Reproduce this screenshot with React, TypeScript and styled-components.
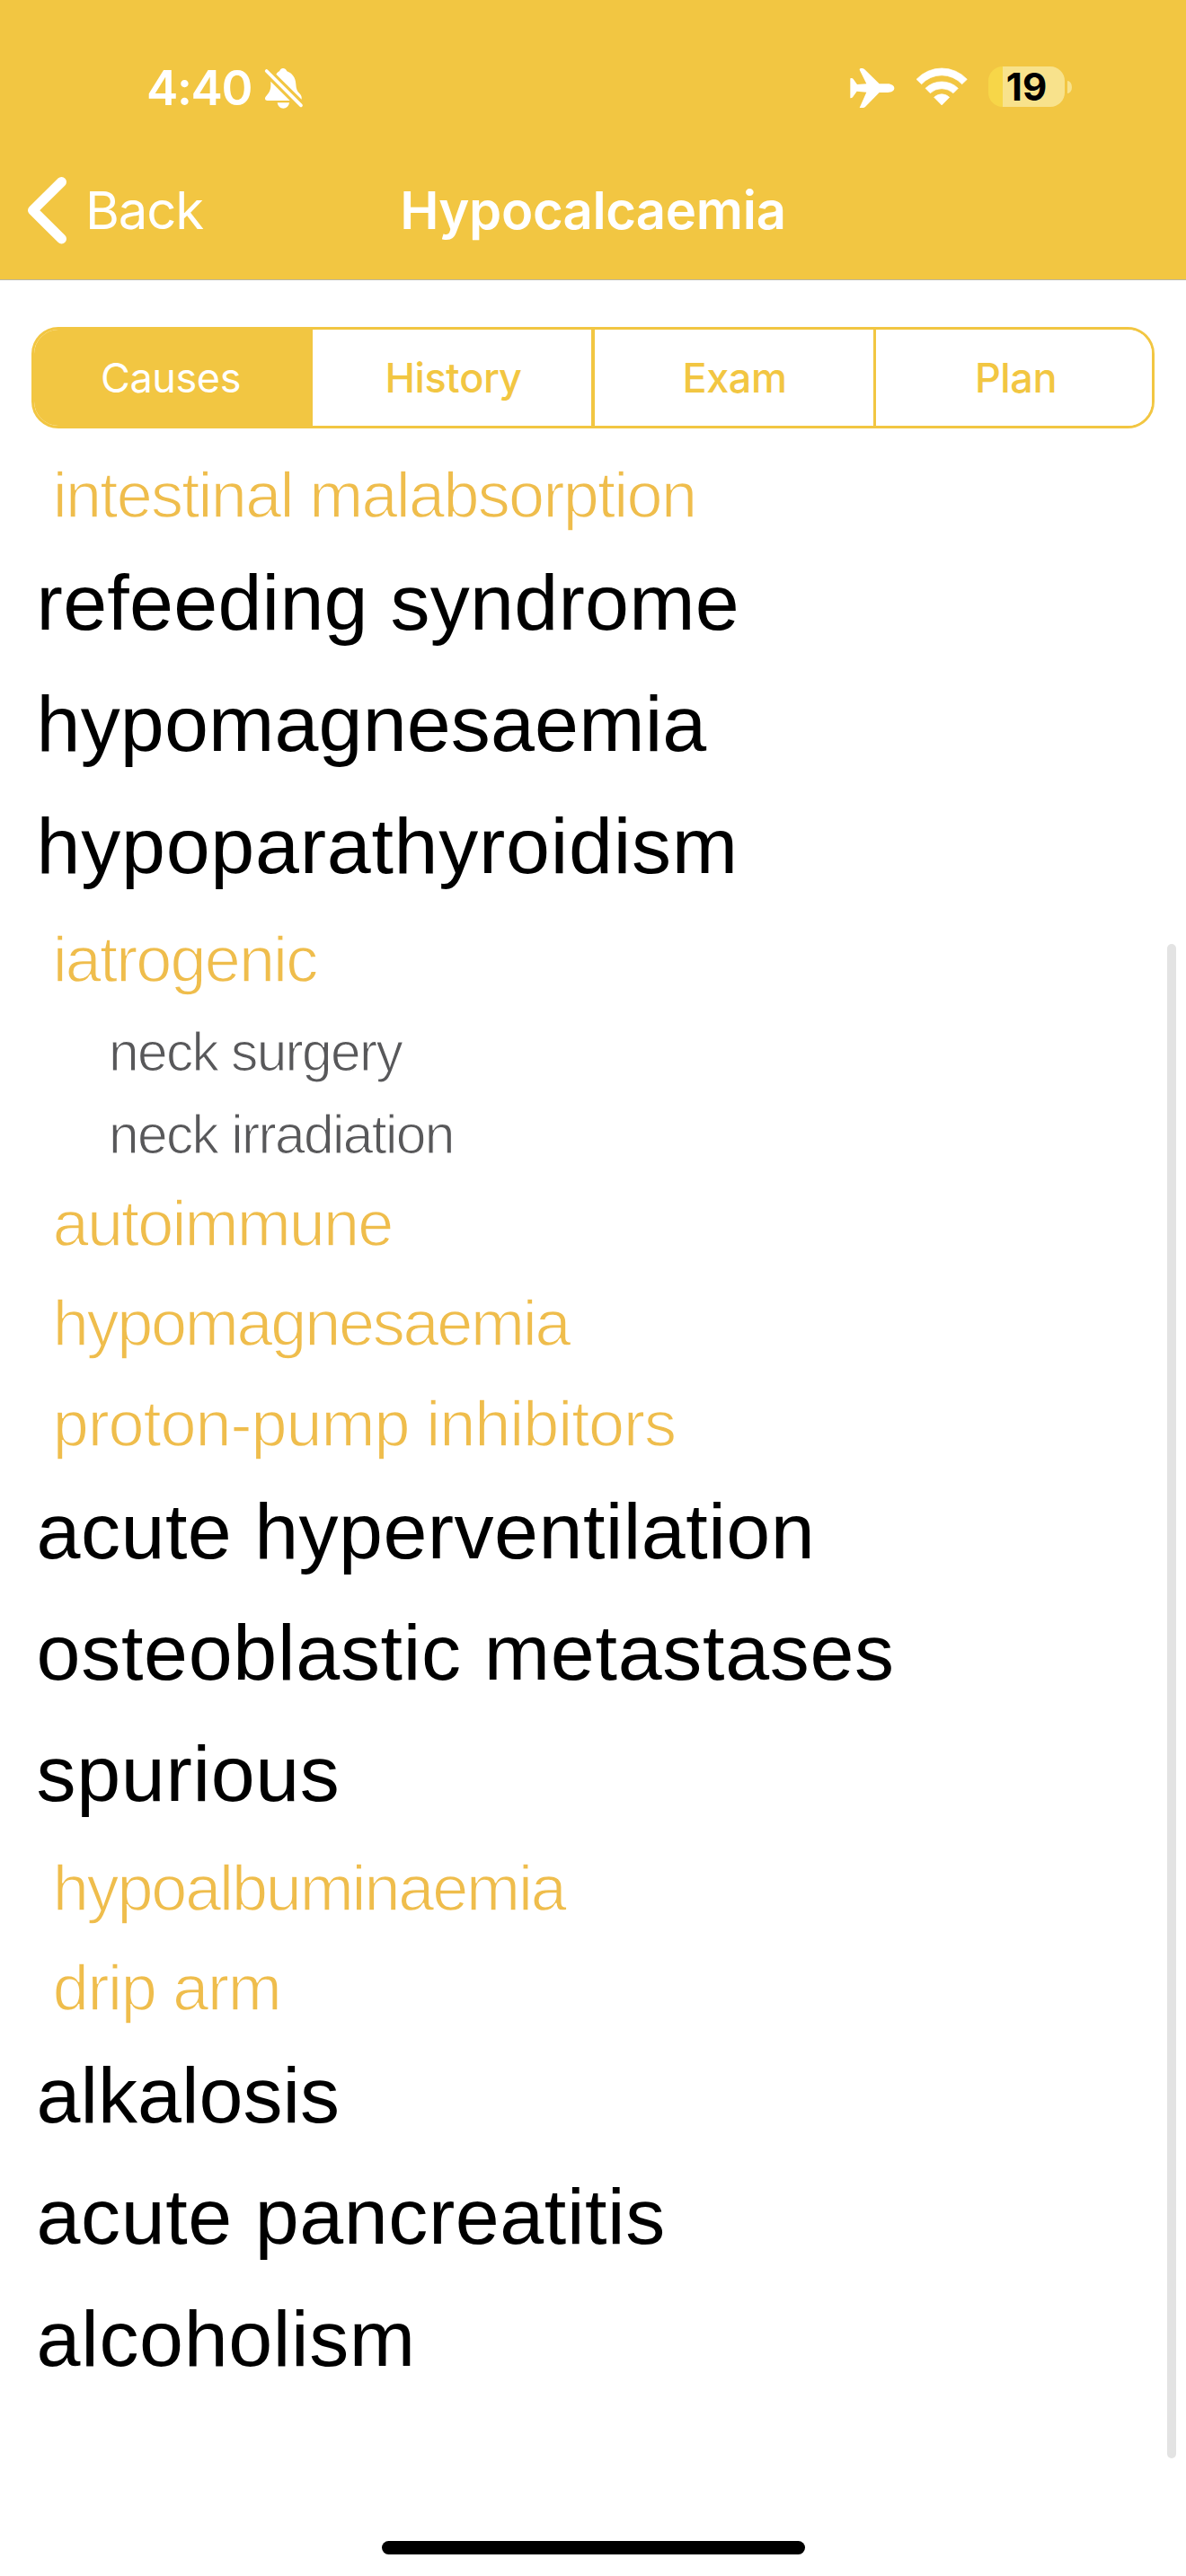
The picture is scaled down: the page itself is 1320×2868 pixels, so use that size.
import React from "react";
import styled, { createGlobalStyle } from "styled-components";

const AMBER = "#f2c642";

const GlobalStyle = createGlobalStyle`
  * { box-sizing: border-box; }
  html, body { margin: 0; padding: 0; background: #fff; }
`;

const Screen = styled.div`
  position: relative;
  display: flex;
  flex-direction: column;
  width: 1320px;
  height: 2868px;
  overflow: hidden;
  background: #fff;
  font-family: Inter, "Liberation Sans", sans-serif;
  font-kerning: none;
`;

const Header = styled.header`
  display: flex;
  flex-direction: column;
  height: 312px;
  flex: none;
  color: #fff;
  background: ${AMBER};
  border-bottom: 1px solid #b9b6a6;
`;

const StatusBar = styled.div`
  display: flex;
  align-items: center;
  justify-content: space-between;
  height: 156px;
  padding: 40px 127px 0 163px;
`;

const StatusGroup = styled.div<{ $gap: number }>`
  display: flex;
  align-items: center;
  gap: ${(p) => p.$gap}px;
`;

const Clock = styled.span`
  font-size: 53px;
  line-height: 60px;
  font-weight: 600;
  letter-spacing: -1.3px;
`;

const WifiIcon = styled.svg`
  margin-bottom: 3px;
`;

const Battery = styled.div`
  display: flex;
  align-items: center;
  gap: 3px;
  margin-bottom: 3px;
`;

const BatteryBody = styled.div`
  display: flex;
  align-items: center;
  justify-content: center;
  width: 85px;
  height: 45px;
  border-radius: 16px;
  color: #000;
  font-size: 42px;
  font-weight: 700;
  line-height: 45px;
  background: linear-gradient(to right, #f7d648 16px, #f8e28c 16px);
`;

const BatteryTip = styled.div`
  width: 5px;
  height: 14px;
  border-radius: 0 5px 5px 0 / 0 7px 7px 0;
  background: #f8e28c;
`;

const NavBar = styled.nav`
  display: grid;
  grid-template-columns: 1fr auto 1fr;
  align-items: center;
  height: 155px;
  padding: 0 30px;
`;

const BackButton = styled.div`
  display: flex;
  align-items: center;
  gap: 20px;
  font-size: 58px;
  line-height: 70px;
  letter-spacing: -1.1px;
`;

const Title = styled.h1`
  margin: 0;
  font-size: 58px;
  line-height: 70px;
  font-weight: 600;
  letter-spacing: -0.3px;
`;

const Segments = styled.div`
  display: grid;
  grid-template-columns: 310px 310px 314px 1fr;
  flex: none;
  height: 113px;
  margin: 52px 35px 16px;
  border: 3px solid ${AMBER};
  border-radius: 30px;
  overflow: hidden;
`;

const Segment = styled.div<{ $active?: boolean; $divider: number; $shift: number }>`
  display: flex;
  align-items: center;
  justify-content: center;
  padding: ${(p) => (p.$shift < 0 ? `0 ${-p.$shift}px 0 0` : `0 0 0 ${p.$shift}px`)};
  font-size: 45px;
  font-weight: ${(p) => (p.$active ? 400 : 450)};
  line-height: 54px;
  letter-spacing: -0.4px;
  color: ${(p) => (p.$active ? "#fff" : AMBER)};
  background: ${(p) => (p.$active ? AMBER : "#fff")};
  border-left: ${(p) => p.$divider}px solid ${AMBER};
`;

const List = styled.ul`
  margin: 0;
  padding: 0;
  list-style: none;
  font-family: "Liberation Sans", Arial, sans-serif;
`;

const Row = styled.li<{ $track: number }>`
  white-space: nowrap;
  letter-spacing: ${(p) => p.$track}px;
`;

const MainRow = styled(Row)`
  height: 135.3px;
  padding-left: 40.6px;
  font-size: 88px;
  line-height: 134.6px;
  color: #000;
`;

const SubRow = styled(Row)`
  height: 111.2px;
  padding: 5px 0 0 58.7px;
  font-size: 72px;
  line-height: 106.2px;
  color: #efbd4c;
  -webkit-text-stroke: 1.4px #fff;
`;

const DetailRow = styled(Row)`
  height: 91.5px;
  padding: 9px 0 0 121px;
  font-size: 60.5px;
  line-height: 82.5px;
  color: #58585a;
  -webkit-text-stroke: 1.2px #fff;
`;

const ScrollThumb = styled.div`
  position: absolute;
  top: 1051px;
  right: 11px;
  width: 10px;
  height: 1686px;
  border-radius: 5px;
  background: #e3e3e3;
`;

const HomeIndicator = styled.div`
  position: absolute;
  left: 425px;
  bottom: 24px;
  width: 471px;
  height: 15px;
  border-radius: 8px;
  background: #000;
`;

const rows: { kind: "main" | "sub" | "detail"; text: string; track: number }[] = [
  { kind: "sub", text: "intestinal malabsorption", track: -1.7 },
  { kind: "main", text: "refeeding syndrome", track: 0.25 },
  { kind: "main", text: "hypomagnesaemia", track: 0.15 },
  { kind: "main", text: "hypoparathyroidism", track: 0.73 },
  { kind: "sub", text: "iatrogenic", track: -1.85 },
  { kind: "detail", text: "neck surgery", track: -1.7 },
  { kind: "detail", text: "neck irradiation", track: -1.66 },
  { kind: "sub", text: "autoimmune", track: -1.85 },
  { kind: "sub", text: "hypomagnesaemia", track: -2.25 },
  { kind: "sub", text: "proton-pump inhibitors", track: -1.05 },
  { kind: "main", text: "acute hyperventilation", track: 0.47 },
  { kind: "main", text: "osteoblastic metastases", track: 0.7 },
  { kind: "main", text: "spurious", track: 0.66 },
  { kind: "sub", text: "hypoalbuminaemia", track: -2.15 },
  { kind: "sub", text: "drip arm", track: -1.3 },
  { kind: "main", text: "alkalosis", track: 0 },
  { kind: "main", text: "acute pancreatitis", track: 0.58 },
  { kind: "main", text: "alcoholism", track: 0.65 },
];

const rowKinds = { main: MainRow, sub: SubRow, detail: DetailRow };

const BellOff = () => (
  <svg width="44" height="47" viewBox="462 74 132 141" fill="#fff">
    <path d="M502 97C505 92 509 89 513 87C516 80 520 77 525 77C530 77 535 80 538 87C555 93 567 108 568 130C569 146 572 152 580 161C586 168 588 172 587 181Z" />
    <path d="M484 121L548 185H473C464 185 463 177 468 171C479 158 484 150 484 134Z" />
    <path d="M506 192H546C544 205 535 211 526 211C516 211 508 204 506 192Z" />
    <path d="M470 86L585 201" stroke="#fff" strokeWidth="11" strokeLinecap="round" />
  </svg>
);

const Airplane = () => (
  <svg width="50" height="46" viewBox="80 75 150 138" fill="#fff">
    <path d="M228 145C228 153 219 159 206 159H178L131 207Q128 210 123 210H112L135 158L103 155L89 175Q87 178 81 178V112Q88 110 91 114L104 132L135 130L112 83Q111 79 117 78Q124 77 129 82L178 130H206C219 130 228 137 228 145Z" />
  </svg>
);

const Wifi = () => (
  <WifiIcon width="58" height="43" viewBox="298 74 174 129" fill="#fff" stroke="#fff" strokeWidth="2" strokeLinejoin="round">
    <path d="M301 114A115 115 0 0 1 470 114L453 130A92 92 0 0 0 318 130Z" />
    <path d="M331 144A78 78 0 0 1 440 144L424 160A57 57 0 0 0 347 160Z" />
    <path d="M360 174A36 36 0 0 1 411 174L385.500 200Z" />
  </WifiIcon>
);

const Chevron = () => (
  <svg width="45" height="76" viewBox="30 195.500 45 76" fill="none">
    <path d="M68.500 202L36.500 233.700L68.500 265.400" stroke="#fff" strokeWidth="11" strokeLinecap="round" strokeLinejoin="round" />
  </svg>
);

export default function App() {
  return (
    <>
      <GlobalStyle />
      <Screen>
        <Header>
          <StatusBar>
            <StatusGroup $gap={14}>
              <Clock>4:40</Clock>
              <BellOff />
            </StatusGroup>
            <StatusGroup $gap={23}>
              <Airplane />
              <Wifi />
              <Battery>
                <BatteryBody>19</BatteryBody>
                <BatteryTip />
              </Battery>
            </StatusGroup>
          </StatusBar>
          <NavBar>
            <BackButton>
              <Chevron />
              <span>Back</span>
            </BackButton>
            <Title>Hypocalcaemia</Title>
          </NavBar>
        </Header>
        <Segments>
          <Segment $active $divider={0} $shift={-6}>Causes</Segment>
          <Segment $divider={0} $shift={3}>History</Segment>
          <Segment $divider={4} $shift={1}>Exam</Segment>
          <Segment $divider={3} $shift={4}>Plan</Segment>
        </Segments>
        <List>
          {rows.map((row, i) => {
            const Kind = rowKinds[row.kind];
            return (
              <Kind key={i} $track={row.track}>
                {row.text}
              </Kind>
            );
          })}
        </List>
        <ScrollThumb />
        <HomeIndicator />
      </Screen>
    </>
  );
}
